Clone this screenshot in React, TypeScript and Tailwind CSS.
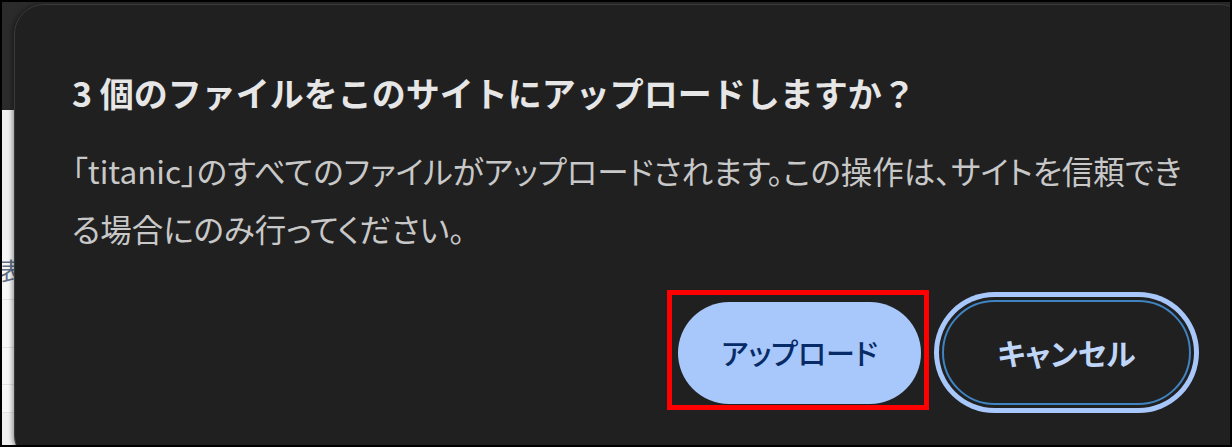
import React from 'react'

const jp = { fontFamily: '"Noto Sans CJK JP", "Noto Sans", sans-serif' }
const prop = { fontFeatureSettings: '"palt"' }

function PageBehind() {
  // what's left visible of the page under the modal
  return (
    <div className="absolute inset-0 flex">
      <div className="w-[14px] flex flex-col">
        <div className="h-[108px] bg-[#2b2b2b]" />
        <div className="flex-1 bg-[#f7f7f7] flex flex-col overflow-hidden">
          <div className="h-[130px] bg-[#eeeeee]" />
          <div className="h-[60px] border-b border-[#e2e2e2] flex items-center">
            <span className="-ml-[3px] text-[24px] leading-none text-[#5f6f86]" style={jp}>表</span>
          </div>
          <div className="h-[48px] border-b border-[#e2e2e2]" />
          <div className="h-[37px] border-b border-[#e2e2e2]" />
          <div className="h-[28px] border-b border-[#e2e2e2]" />
          <div className="flex-1 bg-[#efefef]" />
        </div>
      </div>
      <div className="flex-1 bg-[#2b2b2b]" />
    </div>
  )
}

export default function App() {
  return (
    <div className="w-[1232px] h-[447px] border-2 border-black relative overflow-hidden bg-[#2b2b2b]" style={jp}>
      <PageBehind />
      <div className="absolute left-[12px] top-[2px] -right-[20px] -bottom-[20px] rounded-[30px] bg-[#202020] border border-[#3a3a3a] shadow-[-2px_0_4px_rgba(0,0,0,0.35)] pl-[57px] pr-[58px] pt-[65px]">
        <h1 className="text-[34px] leading-[46px] font-bold text-[#e6e6e6]">
          3 個のファイルをこのサイトにアップロードしますか？
        </h1>
        <p className="mt-[25px] w-[1115px] text-[31.5px] leading-[58px] text-[#c8c8c8]" style={prop}>
          「titanic」のすべてのファイルがアップロードされます。この操作は、サイトを信頼できる場合にのみ行ってください。
        </p>
        <div className="mt-[43px] flex items-center justify-end gap-[21px]">
          <div className="relative">
            <button className="w-[243px] h-[102px] rounded-full bg-[#a8c7fa] text-[#062b66] text-[29px] font-medium" style={prop}>
              アップロード
            </button>
            <div className="absolute -left-[11px] -right-[8px] -top-[12px] -bottom-[6px] border-[5px] border-[#ff0000] pointer-events-none" />
          </div>
          <button className="w-[249px] h-[105px] rounded-full border-2 border-[#3f83c0] bg-[#202020] text-[#c0d6f8] text-[30px] font-bold ring-[5px] ring-[#a8c7fa] ring-offset-[3px] ring-offset-[#202020]" style={prop}>
            キャンセル
          </button>
        </div>
      </div>
    </div>
  )
}
